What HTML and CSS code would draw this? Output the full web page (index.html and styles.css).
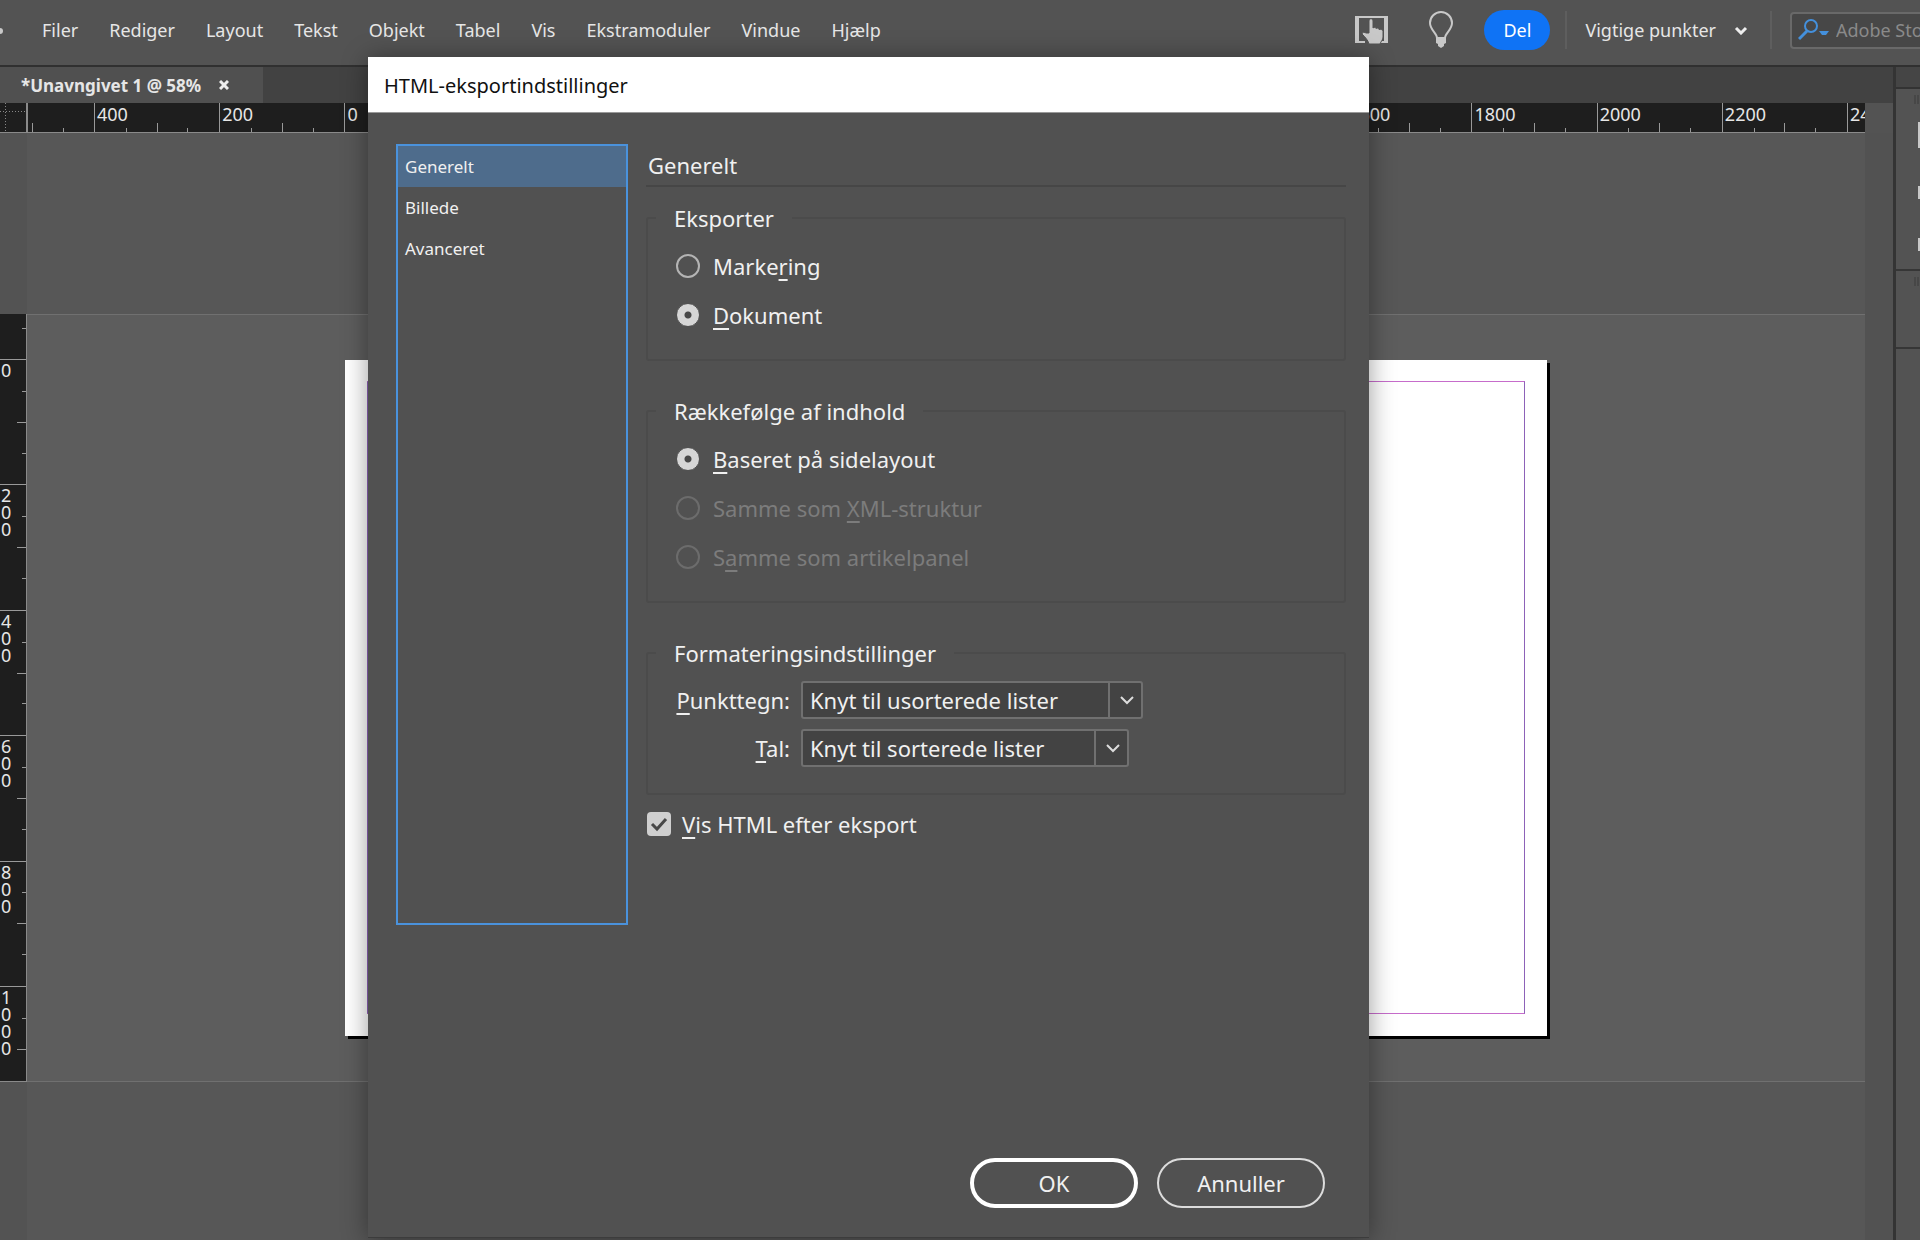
FILE: index.html
```html
<!DOCTYPE html>
<html lang="da">
<head>
  <meta charset="utf-8">
  <title>HTML-eksportindstillinger</title>
  <link rel="stylesheet" href="styles.css">
</head>
<body>
  <header class="menubar">
    <svg class="home" width="4" height="8" viewBox="0 0 4 8"><circle cx="0" cy="5" r="3" fill="#c8c8c8"/></svg>
    <nav class="menu">
      <a href="#">Filer</a>
      <a href="#">Rediger</a>
      <a href="#">Layout</a>
      <a href="#">Tekst</a>
      <a href="#">Objekt</a>
      <a href="#">Tabel</a>
      <a href="#">Vis</a>
      <a href="#">Ekstramoduler</a>
      <a href="#">Vindue</a>
      <a href="#">Hjælp</a>
    </nav>
    <div class="tools">
      <button class="icon-btn" aria-label="Touch">
        <svg width="36" height="30" viewBox="0 0 36 30">
          <path d="M1 1h33v27H26v-2h4V3H5v23h6v2H1z" fill="#c8c8c8" fill-rule="evenodd"/>
          <path d="M15 18V6c0-3 4-3 4 0v7c1-1 3-1 3 .5 1-.8 3-.5 3 1 1.500-.6 4 .3 4 2V22c0 3-2 4-3 7H15c-1-4-4-7-7-10 0-2 3-2 4-1z" fill="#c8c8c8" stroke="#535353" stroke-width="1"/>
        </svg>
      </button>
      <button class="icon-btn" aria-label="Tip">
        <svg width="26" height="38" viewBox="0 0 26 38">
          <path d="M9 27c0-5-7-8-7-15a11 11 0 0 1 22 0c0 7-7 10-7 15z" fill="none" stroke="#c8c8c8" stroke-width="2"/>
          <path d="M8 27h10v5l-2 1v2l-3 2-3-2v-2l-2-1z" fill="#c8c8c8"/>
        </svg>
      </button>
      <button class="share">Del</button>
      <button class="workspace">Vigtige punkter
        <svg width="14" height="9" viewBox="0 0 14 9"><path d="M2 2l5 5 5-5" fill="none" stroke="#eee" stroke-width="3"/></svg>
      </button>
      <label class="search">
        <svg width="32" height="24" viewBox="0 0 32 24">
          <circle cx="13" cy="8" r="6" fill="none" stroke="#4490dc" stroke-width="2"/>
          <path d="M9 13l-8 8" stroke="#4490dc" stroke-width="3"/>
          <path d="M21 13h10l-3 4h-4z" fill="#4490dc"/>
        </svg>
        <input type="text" placeholder="Adobe Stock" aria-label="Adobe Stock">
      </label>
    </div>
  </header>

  <main class="workarea">
    <section class="document">
      <div class="tabs">
        <div class="tab">*Unavngivet 1 @ 58%
          <button class="close" aria-label="Luk"><svg width="10" height="10" viewBox="0 0 10 10"><path d="M1 1l8 8M9 1l-8 8" stroke="#eee" stroke-width="3"/></svg></button>
        </div>
      </div>
      <div class="ruler-x">
        <div class="corner"></div>
        <div class="lead"></div>
        <div class="cell">400</div>
        <div class="cell">200</div>
        <div class="cell">0</div>
        <div class="cell"></div>
        <div class="cell"></div>
        <div class="cell"></div>
        <div class="cell"></div>
        <div class="cell"></div>
        <div class="cell"></div>
        <div class="cell"></div>
        <div class="cell">1600</div>
        <div class="cell">1800</div>
        <div class="cell">2000</div>
        <div class="cell">2200</div>
        <div class="cell last">2400</div>
      </div>
      <div class="view">
        <div class="ruler-y">
          <div class="lead"></div>
          <div class="cell">0</div>
          <div class="cell">2<br>0<br>0</div>
          <div class="cell">4<br>0<br>0</div>
          <div class="cell">6<br>0<br>0</div>
          <div class="cell">8<br>0<br>0</div>
          <div class="cell last">1<br>0<br>0<br>0</div>
        </div>
        <div class="canvas">
          <div class="pasteboard">
            <div class="page"><div class="margins"></div></div>
          </div>
        </div>
        <div class="scrollbar"></div>
      </div>
    </section>
    <aside class="dock">
      <div class="dock-head"></div>
      <div class="dock-group tall">
        <svg width="6" height="170" viewBox="0 0 6 170">
          <path d="M1 6v9M4 6v9" stroke="#3c3c3c"/>
          <path d="M6 34H5v24h1M6 98H5v11h1M6 150H5v11h1" fill="none" stroke="#c8c8c8" stroke-width="2"/>
        </svg>
      </div>
      <div class="dock-group">
        <svg width="6" height="20" viewBox="0 0 6 20"><path d="M1 6v9M4 6v9" stroke="#3c3c3c"/></svg>
      </div>
    </aside>
  </main>

  <div class="dialog" role="dialog" aria-labelledby="dialog-title">
    <h1 class="titlebar" id="dialog-title">HTML-eksportindstillinger</h1>
    <form class="dialog-form" action="#">
      <div class="dialog-body">
        <nav class="sections">
          <a class="active" href="#">Generelt</a>
          <a href="#">Billede</a>
          <a href="#">Avanceret</a>
        </nav>
        <div class="panel">
          <h2>Generelt</h2>
          <fieldset>
            <legend>Eksporter</legend>
            <label class="option"><input type="radio" name="export"><span>Marke<u>r</u>ing</span></label>
            <label class="option"><input type="radio" name="export" checked><span><u>D</u>okument</span></label>
          </fieldset>
          <fieldset>
            <legend>Rækkefølge af indhold</legend>
            <label class="option"><input type="radio" name="order" checked><span><u>B</u>aseret på sidelayout</span></label>
            <label class="option disabled"><input type="radio" name="order" disabled><span>Samme som <u>X</u>ML-struktur</span></label>
            <label class="option disabled"><input type="radio" name="order" disabled><span>S<u>a</u>mme som artikelpanel</span></label>
          </fieldset>
          <fieldset>
            <legend>Formateringsindstillinger</legend>
            <div class="selects">
              <label for="bullets"><u>P</u>unkttegn:</label>
              <div class="select">
                <select id="bullets"><option>Knyt til usorterede lister</option></select>
                <span class="arrow"><svg width="16" height="10" viewBox="0 0 16 10"><path d="M2 2l6 6 6-6" fill="none" stroke="#ddd" stroke-width="2"/></svg></span>
              </div>
              <label for="numbers"><u>T</u>al:</label>
              <div class="select">
                <select id="numbers"><option>Knyt til sorterede lister</option></select>
                <span class="arrow"><svg width="16" height="10" viewBox="0 0 16 10"><path d="M2 2l6 6 6-6" fill="none" stroke="#ddd" stroke-width="2"/></svg></span>
              </div>
            </div>
          </fieldset>
          <label class="check">
            <input type="checkbox" checked>
            <svg width="24" height="24" viewBox="0 0 24 24"><path d="M5 12l5 5 9-10" fill="none" stroke="#484848" stroke-width="3"/></svg>
            <span><u>V</u>is HTML efter eksport</span>
          </label>
        </div>
      </div>
      <div class="buttons">
        <button type="submit" class="btn primary">OK</button>
        <button type="button" class="btn">Annuller</button>
      </div>
    </form>
  </div>
</body>
</html>
```
FILE: styles.css
```css
* {
  box-sizing: border-box;
}

body {
  margin: 0;
  height: 100vh;
  display: flex;
  flex-direction: column;
  overflow: hidden;
  background-color: #535353;
  color: #e6e6e6;
  font-family: "Noto Sans", "Open Sans", sans-serif;
  font-size: 18px;
}

a {
  color: inherit;
  text-decoration: none;
}

button {
  border: 0;
  padding: 0;
  background: none;
  color: inherit;
  font: inherit;
}

svg {
  display: block;
  flex: none;
}

/* menu bar */
.menubar {
  display: flex;
  align-items: center;
  height: 67px;
  padding-bottom: 5px;
  border-bottom: 2px solid #303030;
  white-space: nowrap;
}

.menu {
  display: flex;
  gap: 31px;
  margin-left: 38px;
}

.tools {
  display: flex;
  align-items: center;
  margin-left: auto;
  margin-right: -60px;
}

.icon-btn {
  margin-right: 38px;
}

.icon-btn + .share {
  margin-left: -8px;
}

.share {
  width: 66px;
  height: 40px;
  border-radius: 20px;
  background-color: #0f73f5;
  color: #fff;
}

.workspace {
  display: flex;
  align-items: center;
  gap: 18px;
  height: 38px;
  margin: 0 18px 0 15px;
  padding: 0 22px 0 18px;
  border-left: 2px solid #5e5e5e;
  border-right: 2px solid #5e5e5e;
}

.search {
  display: flex;
  align-items: center;
  gap: 6px;
  width: 190px;
  height: 37px;
  padding-left: 6px;
  border: 2px solid #696969;
  border-radius: 4px;
  background-color: #474747;
}

.search input {
  width: 130px;
  padding: 0;
  border: 0;
  background: none;
  font: inherit;
}

.search input::placeholder {
  color: #8a8a8a;
}

/* document window */
.workarea {
  flex: 1;
  display: flex;
  min-height: 0;
}

.document {
  flex: 1;
  display: flex;
  flex-direction: column;
  min-width: 0;
}

.tabs {
  height: 36px;
  background-color: #424242;
}

.tab {
  display: flex;
  align-items: center;
  gap: 18px;
  width: 263px;
  height: 36px;
  padding-left: 21px;
  background-color: #505050;
  font-size: 17px;
  font-weight: bold;
}

.ruler-x {
  display: flex;
  height: 30px;
  margin-right: 28px;
  border-bottom: 1px solid #8a8a8a;
  background-color: #1e1e1e;
  line-height: 22px;
}

.corner {
  width: 28px;
  border-right: 2px solid #8a8a8a;
  background: repeating-linear-gradient(90deg, #888 0 1px, transparent 1px 3px) 0 8px / 100% 1px no-repeat,
    repeating-linear-gradient(#888 0 1px, transparent 1px 3px) 5px 0 / 1px 100% no-repeat;
}

.ruler-x .lead {
  width: 66px;
  background: linear-gradient(#999, #999) 4px 100% / 1px 9px no-repeat,
    linear-gradient(#999, #999) 35px 100% / 1px 4px no-repeat;
}

.ruler-x .cell {
  flex: 1;
  min-width: 0;
  padding-left: 2px;
  border-left: 1px solid #999;
  background: linear-gradient(#999, #999) 25% 100% / 1px 4px no-repeat,
    linear-gradient(#999, #999) 50% 100% / 1px 9px no-repeat,
    linear-gradient(#999, #999) 75% 100% / 1px 4px no-repeat;
}

.ruler-x .last {
  flex: none;
  width: 18px;
  overflow: hidden;
  background: none;
}

.view {
  flex: 1;
  display: flex;
  min-height: 0;
}

.ruler-y {
  display: flex;
  flex-direction: column;
  width: 27px;
  height: 768px;
  margin-top: 181px;
  border-right: 1px solid #8a8a8a;
  border-bottom: 1px solid #8a8a8a;
  background-color: #1e1e1e;
  line-height: 17px;
}

.ruler-y .lead {
  height: 45px;
  background: linear-gradient(#999, #999) 100% 14px / 4px 1px no-repeat;
}

.ruler-y .cell {
  flex: 1;
  padding: 2px 0 0 1px;
  border-top: 1px solid #999;
  background: linear-gradient(#999, #999) 100% 25% / 4px 1px no-repeat,
    linear-gradient(#999, #999) 100% 50% / 9px 1px no-repeat,
    linear-gradient(#999, #999) 100% 75% / 4px 1px no-repeat;
}

.ruler-y .last {
  flex: none;
  height: 95px;
  background: linear-gradient(#999, #999) 100% 31px / 4px 1px no-repeat,
    linear-gradient(#999, #999) 100% 62px / 9px 1px no-repeat;
}

.canvas {
  flex: 1;
  padding-top: 181px;
  background-color: #575757;
}

.pasteboard {
  position: relative;
  height: 768px;
  border-top: 1px solid #707070;
  border-bottom: 1px solid #707070;
  background-color: #5d5d5d;
}

/* the page lies freely on the pasteboard */
.page {
  position: absolute;
  left: 318px;
  top: 45px;
  width: 1202px;
  height: 676px;
  padding: 21px 22px 22px;
  background-color: #fff;
  box-shadow: 3px 3px 0 #000;
}

.margins {
  height: 100%;
  border: 1px solid #c66ccb;
  border-left-color: #8d62b8;
  border-right-color: #8d62b8;
}

.scrollbar {
  width: 28px;
  background-color: #525252;
}

/* panel dock */
.dock {
  width: 27px;
  border-left: 3px solid #343434;
}

.dock-head {
  height: 22px;
  border-bottom: 2px solid #333;
  background-color: #454545;
}

.dock-group {
  display: flex;
  justify-content: flex-end;
  height: 78px;
  border-bottom: 2px solid #363636;
}

.dock-group.tall {
  height: 182px;
}

/* dialog */
.dialog {
  position: absolute;
  left: 368px;
  top: 57px;
  display: flex;
  flex-direction: column;
  width: 1001px;
  min-height: calc(100vh - 59px);
  border-bottom: 1px solid #3c3c3c;
  background-color: #515151;
  box-shadow: 0 2px 24px rgba(0, 0, 0, 0.4);
  color: #f0f0f0;
  font-size: 22px;
}

.titlebar {
  height: 56px;
  margin: 0;
  padding-left: 16px;
  border-bottom: 1px solid #999;
  background-color: #fff;
  color: #111;
  font-size: 20px;
  font-weight: normal;
  line-height: 58px;
}

.dialog-form {
  flex: 1;
  display: flex;
  flex-direction: column;
}

.dialog-body {
  display: flex;
  gap: 18px;
  padding: 31px 23px 0 28px;
}

.sections {
  width: 232px;
  height: 781px;
  border: 2px solid #4a92dc;
  font-size: 17px;
  line-height: 41px;
}

.sections a {
  display: block;
  padding-left: 7px;
}

.sections .active {
  background-color: #4e6c8c;
}

.panel {
  flex: 1;
}

h2 {
  height: 43px;
  margin: 0 0 16px;
  padding-left: 2px;
  border-bottom: 2px solid #464646;
  font-size: 22px;
  font-weight: normal;
  line-height: 43px;
}

fieldset {
  margin: 0 0 35px;
  padding: 8px 8px 20px;
  border: 2px solid #4b4b4b;
  border-radius: 3px;
}

legend {
  padding: 0 18px;
  line-height: 30px;
}

u {
  text-underline-offset: 4px;
  text-decoration-thickness: 2px;
  text-decoration-skip-ink: none;
}

.option {
  display: flex;
  align-items: center;
  gap: 13px;
  height: 49px;
  padding-left: 20px;
}

.option input {
  appearance: none;
  width: 24px;
  height: 24px;
  margin: 0;
  border: 2px solid #b4b4b4;
  border-radius: 50%;
}

.option input:checked {
  border: 1px solid #515151;
  background: radial-gradient(circle, #484848 3px, #d6d6d6 4px);
}

.disabled {
  color: #7c7c7c;
}

.disabled input {
  border-color: #6c6c6c;
}

.selects {
  display: grid;
  grid-template-columns: 116px 1fr;
  align-items: center;
  gap: 10px 11px;
  padding: 5px 0 6px 18px;
}

.selects label {
  text-align: right;
}

.select {
  position: relative;
  justify-self: start;
}

.select select {
  appearance: none;
  display: block;
  height: 38px;
  padding: 0 82px 0 7px;
  border: 2px solid #707070;
  border-radius: 3px;
  background-color: #434343;
  color: inherit;
  font: inherit;
}

.arrow {
  position: absolute;
  top: 0;
  right: 0;
  display: grid;
  place-items: center;
  width: 35px;
  height: 38px;
  border-left: 2px solid #707070;
  pointer-events: none;
}

.check {
  display: flex;
  align-items: center;
  gap: 11px;
  height: 38px;
  margin-top: -25px;
  padding-left: 1px;
}

.check input {
  appearance: none;
  width: 24px;
  height: 24px;
  margin: 0 -35px 0 0;
  border-radius: 4px;
  background-color: #cfcfcf;
}

.check svg {
  position: relative;
}

.buttons {
  display: flex;
  justify-content: flex-end;
  gap: 19px;
  margin-top: auto;
  padding: 0 44px 29px 0;
}

.btn {
  width: 168px;
  height: 50px;
  border: 2px solid #dcdcdc;
  border-radius: 25px;
}

.primary {
  border: 4px solid #fff;
}
```
